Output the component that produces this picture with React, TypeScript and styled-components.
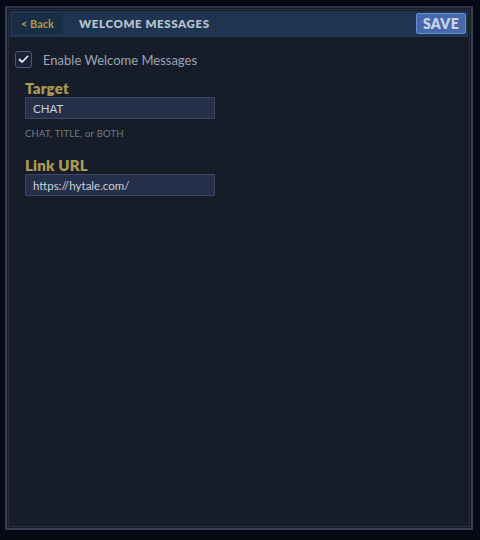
import React, { useState } from "react";
import styled, { createGlobalStyle } from "styled-components";

const GlobalStyle = createGlobalStyle`
  html, body {
    margin: 0;
    padding: 0;
    background: #050a14;
  }
  body {
    font-family: Lato, "Noto Sans", sans-serif;
  }
`;

function App() {
  const [enabled, setEnabled] = useState(true);

  return (
    <>
      <GlobalStyle />
      <Page>
        <Frame>
          <Panel>
            <Header>
              <BackButton>&lt; Back</BackButton>
              <Title>WELCOME MESSAGES</Title>
              <SaveButton>SAVE</SaveButton>
            </Header>
            <Body>
              <CheckRow onClick={() => setEnabled(!enabled)}>
                <CheckBox>
                  {enabled && (
                    <svg width="11" height="9" viewBox="0 0 11 9">
                      <path
                        d="M1.5 4.5 L4.2 7 L9.5 1.5"
                        fill="none"
                        stroke="#e8ecf4"
                        strokeWidth="1.8"
                        strokeLinecap="round"
                        strokeLinejoin="round"
                      />
                    </svg>
                  )}
                </CheckBox>
                <CheckLabel>Enable Welcome Messages</CheckLabel>
              </CheckRow>
              <Field>
                <FieldLabel>Target</FieldLabel>
                <TextInput defaultValue="CHAT" />
                <Hint>CHAT, TITLE, or BOTH</Hint>
              </Field>
              <Field>
                <FieldLabel>Link URL</FieldLabel>
                <TextInput defaultValue="https://hytale.com/" />
              </Field>
            </Body>
          </Panel>
        </Frame>
      </Page>
    </>
  );
}

export default App;

const Page = styled.div`
  width: 480px;
  height: 540px;
  box-sizing: border-box;
  padding: 6px 7px 10px 5px;
`;

const Frame = styled.div`
  height: 100%;
  box-sizing: border-box;
  border: 2px solid #363d52;
  border-top-color: #2c3346;
  background: #161d29;
  padding: 1px;
`;

const Panel = styled.div`
  height: 100%;
  box-sizing: border-box;
  border: 1px solid #262d3d;
  background: #161d29;
  display: flex;
  flex-direction: column;
`;

const Header = styled.header`
  display: flex;
  align-items: center;
  height: 25px;
  margin: 1px 1px 0;
  padding: 0 2px;
  background: #1e3451;
  border-bottom: 1px solid #243a58;
`;

const BackButton = styled.button`
  height: 21px;
  width: 51px;
  border: none;
  background: #1a2d47;
  color: #b09848;
  font-family: Lato, "Noto Sans", sans-serif;
  font-weight: 700;
  font-size: 11px;
  padding: 0;
  cursor: pointer;
`;

const Title = styled.h1`
  flex: 1;
  margin: 0 0 0 16px;
  font-size: 11.5px;
  font-weight: 800;
  letter-spacing: 0.6px;
  color: #b4c0d0;
`;

const SaveButton = styled.button`
  height: 21px;
  width: 50px;
  border: 1px solid #6a8fd0;
  border-radius: 2px;
  background: #4868ac;
  color: #c8d4e8;
  font-family: Lato, "Noto Sans", sans-serif;
  font-weight: 800;
  font-size: 14px;
  letter-spacing: 0.4px;
  padding: 0;
  cursor: pointer;
`;

const Body = styled.div`
  display: flex;
  flex-direction: column;
  padding: 14px 0 0 6px;
`;

const CheckRow = styled.label`
  display: flex;
  align-items: center;
  gap: 11px;
  cursor: pointer;
`;

const CheckBox = styled.span`
  box-sizing: border-box;
  width: 17px;
  height: 17px;
  border: 1.5px solid #4c5676;
  border-radius: 3px;
  background: #1b2234;
  display: flex;
  align-items: center;
  justify-content: center;
`;

const CheckLabel = styled.span`
  font-size: 13px;
  color: #9aa4b8;
`;

const Field = styled.div`
  display: flex;
  flex-direction: column;
  padding-left: 10px;
  margin-top: 12px;
  & + & {
    margin-top: 18px;
  }
`;

const FieldLabel = styled.div`
  font-size: 15px;
  font-weight: 800;
  color: #ad9a52;
  line-height: 16px;
  letter-spacing: 0.2px;
`;

const TextInput = styled.input`
  box-sizing: border-box;
  width: 190px;
  height: 22px;
  margin-top: 1px;
  border: 1px solid #3c4864;
  border-radius: 1px;
  background: #252f49;
  color: #c8d0de;
  font-family: Lato, "Noto Sans", sans-serif;
  font-size: 11.5px;
  padding: 0 7px;
  outline: none;
`;

const Hint = styled.div`
  margin-top: 9px;
  font-size: 9.5px;
  letter-spacing: 0.2px;
  color: #727c8c;
`;
